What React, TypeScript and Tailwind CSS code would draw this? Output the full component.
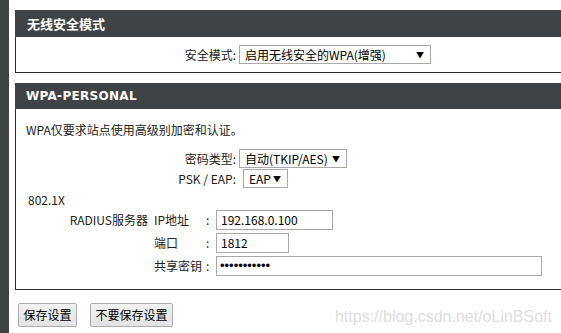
import React from "react";

const font = { fontFamily: '"Noto Sans CJK SC", "Liberation Sans", sans-serif' };

function FakeSelect({ text, width }: { text: string; width: string }) {
  return (
    <div
      className={`flex h-[19px] ${width} items-center justify-between whitespace-nowrap border border-[#a9a9a9] bg-white pl-[5px] pr-[6px] text-[12px] leading-none text-black`}
    >
      <span>{text}</span>
      <span className="text-[8px]">▼</span>
    </div>
  );
}

export default function App() {
  return (
    <div
      className="relative flex h-[333px] w-[561px] overflow-hidden bg-white text-[12px] text-[#222]"
      style={font}
    >
      <div className="w-[9px] shrink-0 bg-[#404344]" />
      <div className="ml-[6px] w-[620px] shrink-0 pt-[10px]">
        {/* Section 1 */}
        <div className="flex h-[27px] items-center bg-[#3f4345] pl-[12px] text-[13px] font-bold text-white">
          无线安全模式
        </div>
        <div className="flex h-[36px] items-center whitespace-nowrap border-b border-l border-[#2f2f2f] pl-[164px]">
          <span className="w-[56px] text-right">安全模式:</span>
          <span className="ml-[3px]">
            <FakeSelect text="启用无线安全的WPA(增强)" width="w-[192px]" />
          </span>
        </div>

        {/* Section 2 */}
        <div
          className="mt-[10px] flex h-[26px] items-center bg-[#3f4345] pl-[11px] text-[12px] font-bold tracking-[0.3px] text-white"
          style={{ fontFamily: '"DejaVu Sans", sans-serif' }}
        >
          WPA-PERSONAL
        </div>
        <div className="flex h-[181px] flex-col whitespace-nowrap border-b border-l border-[#2f2f2f] pl-[10px]">
          <div className="mt-[12px] leading-[18px]">WPA仅要求站点使用高级别加密和认证。</div>

          <div className="mt-[10px] flex flex-col gap-[1px]">
            <div className="flex h-[19px] items-center">
              <span className="w-[210px] text-right">密码类型:</span>
              <span className="ml-[3px]">
                <FakeSelect text="自动(TKIP/AES)" width="w-[108px]" />
              </span>
            </div>
            <div className="flex h-[19px] items-center">
              <span className="w-[210px] text-right">PSK / EAP:</span>
              <span className="ml-[7px]">
                <FakeSelect text="EAP" width="w-[45px]" />
              </span>
            </div>
          </div>

          <div className="mt-[4px] pl-[2px] leading-[16px]">802.1X</div>

          <div className="mt-[2px] flex flex-col gap-[3px]">
            <div className="flex h-[20px] items-center">
              <span className="w-[122px] text-right">RADIUS服务器</span>
              <span className="ml-[6px] w-[52px]">IP地址</span>
              <span className="w-[10px]">:</span>
              <div className="h-[20px] w-[117px] border border-[#a9a9a9] pl-[4px] leading-[18px] text-black">
                192.168.0.100
              </div>
            </div>
            <div className="flex h-[20px] items-center">
              <span className="w-[122px]" />
              <span className="ml-[6px] w-[52px]">端口</span>
              <span className="w-[10px]">:</span>
              <div className="h-[20px] w-[73px] border border-[#a9a9a9] pl-[4px] leading-[18px] text-black">
                1812
              </div>
            </div>
            <div className="flex h-[20px] items-center">
              <span className="w-[122px]" />
              <span className="ml-[6px] w-[52px]">共享密钥</span>
              <span className="w-[10px]">:</span>
              <div
                className="h-[20px] w-[326px] border border-[#a9a9a9] pl-[3px] text-[13px] leading-[18px] text-black"
                style={{ fontFamily: '"Liberation Sans", sans-serif' }}
              >
                •••••••••••
              </div>
            </div>
          </div>
        </div>

        {/* Buttons */}
        <div className="mt-[13px] flex gap-[13px] pl-[3px]">
          <button className="h-[24px] w-[59px] rounded-[2px] border border-[#adadad] bg-gradient-to-b from-[#f2f2f2] to-[#e2e2e2] text-[12px] text-black">
            保存设置
          </button>
          <button className="h-[24px] w-[83px] rounded-[2px] border border-[#adadad] bg-gradient-to-b from-[#f2f2f2] to-[#e2e2e2] text-[12px] text-black">
            不要保存设置
          </button>
        </div>
      </div>

      <div
        className="absolute right-[9px] top-[305px] text-[16px] text-[#dedede]"
        style={{ fontFamily: '"Liberation Sans", sans-serif' }}
      >
        https://blog.csdn.net/oLinBSoft
      </div>
    </div>
  );
}
